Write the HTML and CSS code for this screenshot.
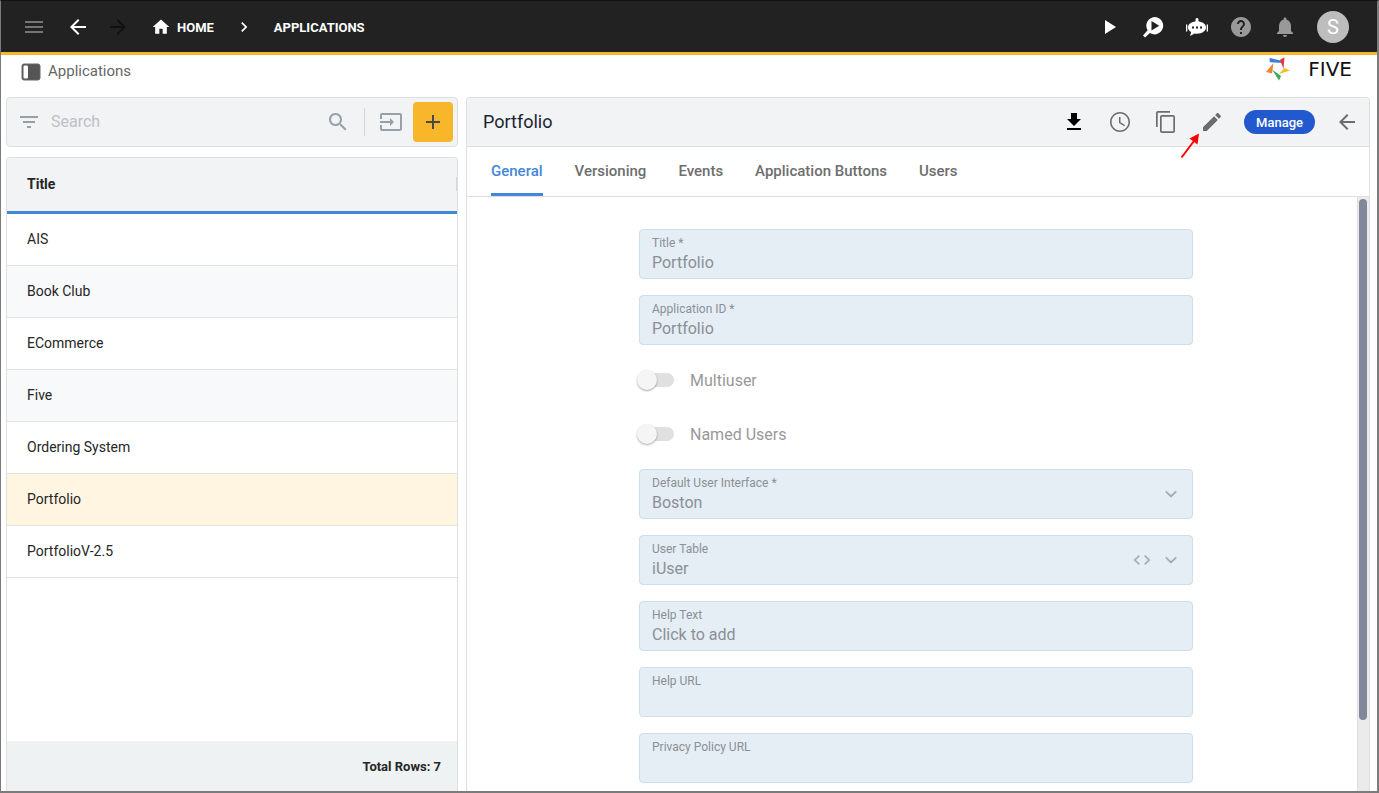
FILE: index.html
```html
<!DOCTYPE html>
<html lang="en">
<head>
<meta charset="utf-8">
<title>Five - Applications</title>
<link rel="stylesheet" href="styles.css">
</head>
<body>
<div class="app">
  <header class="topbar">
    <button class="icon-btn menu" aria-label="Menu"><svg viewBox="0 0 24 24"><path d="M3 18h18v-2H3v2zm0-5h18v-2H3v2zm0-7v2h18V6H3z"/></svg></button>
    <button class="icon-btn back" aria-label="Back"><svg viewBox="0 0 24 24"><path d="M20 11H7.83l5.59-5.59L12 4l-8 8 8 8 1.41-1.41L7.83 13H20v-2z"/></svg></button>
    <button class="icon-btn forward" aria-label="Forward" disabled><svg viewBox="0 0 24 24"><path d="m12 4-1.41 1.41L16.17 11H4v2h12.17l-5.58 5.59L12 20l8-8z"/></svg></button>
    <nav class="crumbs" aria-label="Breadcrumb">
      <a class="crumb home" href="#"><svg class="home-icon" viewBox="0 0 24 24"><path d="M10 20v-6h4v6h5v-8h3L12 3 2 12h3v8z"/></svg>HOME</a>
      <svg class="crumb-sep" viewBox="0 0 24 24"><path d="M10 6 8.590 7.410 13.170 12l-4.580 4.590L10 18l6-6z"/></svg>
      <a class="crumb" href="#">APPLICATIONS</a>
    </nav>
    <div class="top-actions">
      <button class="icon-btn" aria-label="Run"><svg viewBox="0 0 24 24"><path d="M8 5v14l11-7z"/></svg></button>
      <button class="icon-btn" aria-label="Inspect"><svg viewBox="0 0 24 24"><path fill-rule="evenodd" d="M13.500 2a8.700 8.700 0 1 1-4.600 16.100L4 22.500 2 20.500l4.600-5.200A8.700 8.700 0 0 1 13.500 2zM10.500 6v9.400l7.700-4.700z"/></svg></button>
      <button class="icon-btn" aria-label="Assistant"><svg viewBox="0 0 24 24"><path fill-rule="evenodd" d="M12 3a1.500 1.500 0 0 1 1.300 2.300l.5 1.300c4.200.5 7.200 2.800 7.200 5.900 0 3.400-4 6.200-9 6.200-.8 0-1.600-.1-2.300-.2L5 21l1.200-3.900C4.200 16 3 14.400 3 12.500c0-3.100 3-5.400 7.200-5.900l.5-1.300A1.500 1.500 0 0 1 12 3zM7 11.500v2h2v-2zm4 0v2h2v-2zm4 0v2h2v-2z"/><path d="M1 9.500h1.300v7H1zM21.700 9.500H23v7h-1.300z"/></svg></button>
      <button class="icon-btn dim" aria-label="Help"><svg viewBox="0 0 24 24"><path d="M12 2C6.480 2 2 6.480 2 12s4.480 10 10 10 10-4.480 10-10S17.520 2 12 2zm1 17h-2v-2h2v2zm2.070-7.750-.9.920C13.450 12.900 13 13.500 13 15h-2v-.5c0-1.100.450-2.100 1.170-2.830l1.240-1.260c.370-.360.590-.860.590-1.410 0-1.100-.9-2-2-2s-2 .9-2 2H8c0-2.210 1.790-4 4-4s4 1.790 4 4c0 .880-.360 1.680-.930 2.250z"/></svg></button>
      <button class="icon-btn dim" aria-label="Notifications"><svg viewBox="0 0 24 24"><path d="M12 22c1.100 0 2-.9 2-2h-4c0 1.100.890 2 2 2zm6-6v-5c0-3.070-1.640-5.640-4.500-6.320V4c0-.830-.670-1.500-1.500-1.500s-1.500.670-1.500 1.500v.680C7.630 5.360 6 7.920 6 11v5l-2 2v1h16v-1l-2-2z"/></svg></button>
      <button class="avatar" aria-label="Account">S</button>
    </div>
  </header>

  <div class="subbar">
    <svg class="layout-icon" viewBox="0 0 20 18"><rect x="1" y="1" width="18" height="16" rx="2" fill="#555" stroke="#666" stroke-width="1"/><rect x="2.500" y="2.500" width="4.500" height="13" rx="1" fill="#fff"/></svg>
    <span class="subbar-title">Applications</span>
    <div class="logo">
      <svg viewBox="0 0 24 24"><path fill="#3f7fd6" d="M3.500 1 16.500 4 17 6 3.800 5.200z"/><path fill="#e8343a" d="M14 2.800 18.500.3 17.500 12z"/><path fill="#fbb829" d="M24 13.500 13 17 18.500 11z"/><path fill="#3aa757" d="M6 12.500 15 19 13 23.500z"/><path fill="#f58233" d="M7.500 6 6 16.500 0 15z"/></svg>
      <span>FIVE</span>
    </div>
  </div>

  <main class="content">
    <section class="list-pane">
      <div class="searchbar">
        <svg class="filter-icon" viewBox="0 0 24 24"><path d="M10 18h4v-2h-4v2zM3 6v2h18V6H3zm3 7h12v-2H6v2z"/></svg>
        <input class="search" type="text" placeholder="Search" aria-label="Search">
        <button class="icon-btn" aria-label="Search records"><svg viewBox="0 0 24 24"><path d="M15.500 14h-.790l-.280-.270C15.410 12.590 16 11.110 16 9.500 16 5.910 13.090 3 9.500 3S3 5.910 3 9.500 5.910 16 9.500 16c1.610 0 3.090-.590 4.230-1.570l.270.280v.790l5 4.990L20.490 19l-4.990-5zm-6 0C7.010 14 5 11.990 5 9.500S7.010 5 9.500 5 14 7.010 14 9.500 11.990 14 9.500 14z"/></svg></button>
        <span class="divider"></span>
        <button class="icon-btn" aria-label="Import"><svg viewBox="0 0 24 24"><path d="M21 3H3c-1.100 0-2 .9-2 2v4h2V5h18v14H3v-4H1v4c0 1.100.9 2 2 2h18c1.100 0 2-.9 2-2V5c0-1.100-.9-2-2-2zM11 16l4-4-4-4v3H1v2h10z"/></svg></button>
        <button class="add" aria-label="Add"><svg viewBox="0 0 24 24"><path d="M19 13h-6v6h-2v-6H5v-2h6V5h2v6h6z"/></svg></button>
      </div>
      <div class="list-card">
        <table class="list">
          <thead><tr><th scope="col"><div class="th-inner">Title<span class="grip"></span></div></th></tr></thead>
          <tbody>
            <tr><td>AIS</td></tr>
            <tr><td>Book Club</td></tr>
            <tr><td>ECommerce</td></tr>
            <tr><td>Five</td></tr>
            <tr><td>Ordering System</td></tr>
            <tr class="selected"><td>Portfolio</td></tr>
            <tr><td>PortfolioV-2.5</td></tr>
          </tbody>
        </table>
        <div class="list-footer">Total Rows: 7</div>
      </div>
    </section>

    <section class="detail">
      <div class="detail-head">
        <h1>Portfolio</h1>
        <button class="icon-btn download" aria-label="Download"><svg viewBox="0 0 24 24"><path d="M19 9h-4V3H9v6H5l7 7zM5 18v2h14v-2z"/></svg></button>
        <button class="icon-btn" aria-label="History"><svg viewBox="0 0 24 24"><path d="M11.990 2C6.470 2 2 6.480 2 12s4.470 10 9.990 10C17.520 22 22 17.520 22 12S17.520 2 11.990 2zM12 20.400c-4.640 0-8.400-3.760-8.400-8.400S7.360 3.600 12 3.600s8.400 3.760 8.400 8.400-3.760 8.400-8.400 8.400z"/><path d="M12.500 7H11v6l5.250 3.150.750-1.230-4.500-2.670z"/></svg></button>
        <button class="icon-btn" aria-label="Copy"><svg viewBox="0 0 24 24"><path d="M16 1H4c-1.100 0-2 .9-2 2v14h1.700V2.700H16V1zm3 4H8c-1.100 0-2 .9-2 2v14c0 1.100.9 2 2 2h11c1.100 0 2-.9 2-2V7c0-1.100-.9-2-2-2zm.3 16.300H7.700V6.700h11.600v14.600z"/></svg></button>
        <button class="icon-btn edit" aria-label="Edit"><svg viewBox="0 0 24 24"><path d="M3 17.250V21h3.750L17.810 9.940l-3.750-3.750L3 17.250zM20.710 7.040c.390-.390.390-1.020 0-1.410l-2.340-2.340c-.390-.390-1.020-.390-1.410 0l-1.830 1.830 3.750 3.750 1.830-1.830z"/></svg><svg class="pointer" viewBox="0 0 20 26"><path d="M1.500 24.500 14 8" stroke="#f00" stroke-width="2" fill="none"/><path d="M19 .5 17.500 11.500 9.500 5.500z" fill="#f00"/></svg></button>
        <button class="manage">Manage</button>
        <button class="icon-btn close" aria-label="Close"><svg viewBox="0 0 24 24"><path d="M20 11H7.830l5.590-5.590L12 4l-8 8 8 8 1.410-1.410L7.830 13H20v-2z"/></svg></button>
      </div>
      <div class="tabs" role="tablist">
        <button class="tab active" role="tab" aria-selected="true">General</button>
        <button class="tab" role="tab">Versioning</button>
        <button class="tab" role="tab">Events</button>
        <button class="tab" role="tab">Application Buttons</button>
        <button class="tab" role="tab">Users</button>
      </div>
      <div class="detail-body">
        <form class="form">
          <div class="field"><label for="title">Title *</label><input id="title" type="text" value="Portfolio" disabled></div>
          <div class="field"><label for="appid">Application ID *</label><input id="appid" type="text" value="Portfolio" disabled></div>
          <label class="switch"><input type="checkbox" disabled>Multiuser</label>
          <label class="switch"><input type="checkbox" disabled>Named Users</label>
          <div class="field"><label for="ui">Default User Interface *</label><select id="ui" disabled><option>Boston</option></select>
            <span class="adorn"><svg viewBox="0 0 24 24"><path d="M6.500 8.100 12 13.200l5.500-5.100L19 9.600l-7 6.900-7-6.900z"/></svg></span></div>
          <div class="field"><label for="usertable">User Table</label><select id="usertable" disabled><option>iUser</option></select>
            <span class="adorn"><svg class="code" viewBox="0 0 24 24"><path d="M9.400 16.600 4.800 12l4.600-4.600L8 6l-6 6 6 6zm5.200 0 4.600-4.600-4.600-4.600L16 6l6 6-6 6z"/></svg><svg viewBox="0 0 24 24"><path d="M6.500 8.100 12 13.200l5.500-5.100L19 9.600l-7 6.900-7-6.900z"/></svg></span></div>
          <div class="field"><label for="help">Help Text</label><input id="help" type="text" value="Click to add" disabled></div>
          <div class="field"><label for="helpurl">Help URL</label><input id="helpurl" type="text" disabled></div>
          <div class="field"><label for="privacy">Privacy Policy URL</label><input id="privacy" type="text" disabled></div>
        </form>
        <div class="scroll-track"><div class="scroll-thumb"></div></div>
      </div>
    </section>
  </main>
</div>
</body>
</html>
```
FILE: styles.css
```css
* { box-sizing: border-box; }

body {
  margin: 0;
  font-family: Roboto, "Liberation Sans", sans-serif;
  font-size: 14px;
  color: #262626;
  background: #fff;
}

button, input, select { font: inherit; color: inherit; }

button {
  padding: 0;
  border: 0;
  background: none;
  cursor: pointer;
}

a { color: inherit; text-decoration: none; }

svg { display: block; fill: currentColor; }

.app {
  display: flex;
  flex-direction: column;
  height: 100vh;
  border: 1px solid #7b7b7b;
  border-right-width: 2px;
  border-bottom-width: 2px;
  border-top-color: #111;
  overflow: hidden;
}

.icon-btn { flex: none; width: 24px; height: 24px; }
.icon-btn svg { width: 24px; height: 24px; }

/* Top bar */
.topbar {
  flex: none;
  display: flex;
  align-items: center;
  height: 54px;
  padding: 0 28px 0 21px;
  background: #222;
  color: #fff;
  border-bottom: 3px solid #f8b62b;
}
.menu { color: #757575; }
.back { margin-left: 20px; }
.forward { margin-left: 16px; color: #111; }

.crumbs {
  display: flex;
  align-items: center;
  margin-left: 21px;
  padding-top: 1px;
  font-size: 13px;
  font-weight: 700;
}
.crumb { display: flex; align-items: center; }
.home-icon { width: 20px; height: 20px; margin-right: 6px; }
.crumb-sep { width: 20px; height: 20px; margin: 0 20px; }

.top-actions {
  display: flex;
  align-items: center;
  gap: 20px;
  margin-left: auto;
}
.dim { color: #999; }
.avatar {
  width: 32px;
  height: 32px;
  border-radius: 50%;
  background: #bdbdbd;
  font-size: 20px;
}

/* Page title row */
.subbar {
  flex: none;
  display: flex;
  align-items: center;
  height: 42px;
  padding: 0 25px 8px 20px;
  font-size: 15px;
  color: #666;
}
.subbar-title { padding-bottom: 2px; }
.layout-icon { width: 20px; height: 18px; margin-right: 7px; }
.logo {
  display: flex;
  align-items: center;
  gap: 18px;
  margin-left: auto;
  padding-bottom: 6px;
  font-family: "DejaVu Sans", sans-serif;
  font-size: 20px;
  line-height: 24px;
  color: #111;
}
.logo svg { width: 24px; height: 24px; }

/* Two panes */
.content {
  flex: 1;
  display: flex;
  gap: 8px;
  min-height: 0;
  padding: 0 7px 0 5px;
}

.list-pane {
  flex: 0 0 452px;
  display: flex;
  flex-direction: column;
  gap: 10px;
}

.searchbar {
  flex: none;
  display: flex;
  align-items: center;
  height: 50px;
  padding: 0 4px 0 10px;
  border: 1px solid #dedfe0;
  border-radius: 4px;
  background: #f1f3f5;
  color: #98a0a7;
}
.filter-icon { flex: none; width: 24px; height: 24px; }
.search {
  flex: 1;
  min-width: 0;
  padding: 0 10px 2px;
  border: 0;
  outline: 0;
  background: none;
  font-size: 16px;
}
.search::placeholder { color: #bdc1c4; opacity: 1; }
.divider {
  width: 1px;
  height: 28px;
  margin: 0 14px;
  background: #d2d4d6;
}
.add {
  display: grid;
  place-items: center;
  width: 40px;
  height: 40px;
  margin-left: 10px;
  border-radius: 4px;
  background: #f8b62b;
  color: #484848;
}
.add svg { width: 24px; height: 24px; }

.list-card {
  flex: 1;
  display: flex;
  flex-direction: column;
  min-height: 0;
  border: 1px solid #dedfe0;
  border-bottom: 0;
  border-radius: 4px 4px 0 0;
  overflow: hidden;
}
.list { width: 100%; border-collapse: separate; border-spacing: 0; }
.list th {
  height: 56px;
  padding: 0 0 2px 20px;
  border-bottom: 3px solid #4487d8;
  background: #f1f3f5;
  text-align: left;
  font-weight: 700;
}
.th-inner { display: flex; justify-content: space-between; align-items: center; }
.grip { width: 1px; height: 14px; background: #d5d7d9; }
.list td {
  height: 52px;
  padding: 0 20px 2px;
  border-bottom: 1px solid #e2e3e4;
}
.list tbody tr:nth-child(even) td { background: #f8f9fb; }
.list tbody tr.selected td { background: #fff5e1; }
.list-footer {
  margin-top: auto;
  padding: 2px 16px 0;
  background: #eef2f3;
  text-align: right;
  line-height: 48px;
  font-size: 13px;
  font-weight: 700;
}

/* Detail pane */
.detail {
  flex: 1;
  display: flex;
  flex-direction: column;
  min-width: 0;
  border: 1px solid #dedfe0;
  border-bottom: 0;
  border-radius: 4px 4px 0 0;
  overflow: hidden;
}
.detail-head {
  flex: none;
  display: flex;
  align-items: center;
  height: 49px;
  padding: 0 10px 0 16px;
  border-bottom: 1px solid #dedfe0;
  background: #f1f3f5;
  color: #6c6c6c;
}
.detail-head h1 {
  flex: 1;
  margin: 0;
  padding-bottom: 2px;
  font-size: 18px;
  font-weight: 400;
  color: #1b2433;
}
.detail-head .icon-btn { margin-left: 22px; }
.detail-head .download { color: #000; }
.detail-head .close { margin-left: 20px; }
.edit { position: relative; }
.icon-btn .pointer {
  position: absolute;
  top: 23px;
  left: -20px;
  width: 20px;
  height: 26px;
}
.manage {
  height: 24px;
  margin-left: 20px;
  padding: 0 12px;
  border-radius: 12px;
  background: #2259cf;
  color: #fff;
  font-size: 13px;
  font-weight: 500;
}

.tabs {
  flex: none;
  display: flex;
  gap: 32px;
  height: 50px;
  padding: 0 24px;
  border-bottom: 1px solid #dedfe0;
}
.tab {
  padding-bottom: 2px;
  border-top: 3px solid transparent;
  border-bottom: 3px solid transparent;
  font-size: 15px;
  font-weight: 500;
  color: #6e6e6e;
}
.tab.active { color: #4487d8; border-bottom-color: #4487d8; }

.detail-body {
  flex: 1;
  display: flex;
  min-height: 0;
  padding-left: 8px;
  overflow: hidden;
}
.form {
  flex: 1;
  display: flex;
  flex-direction: column;
  gap: 16px;
  max-width: 554px;
  margin: 0 auto;
  padding-top: 32px;
}

.field {
  flex: none;
  position: relative;
  display: flex;
  flex-direction: column;
  height: 50px;
  padding: 5px 12px;
  border: 1px solid #cddfed;
  border-radius: 4px;
  background: #e5edf5;
  color: #8b9095;
}
.field label { font-size: 12px; line-height: 16px; }
.field input, .field select {
  width: 100%;
  height: 22px;
  padding: 0;
  border: 0;
  background: none;
  appearance: none;
  font-size: 16px;
  color: inherit;
  opacity: 1;
}
.field select { height: 24px; }
.adorn {
  position: absolute;
  right: 11px;
  top: 14px;
  display: flex;
  gap: 9px;
  color: #a5adb5;
}
.adorn svg { width: 20px; height: 20px; }

.switch {
  flex: none;
  display: flex;
  align-items: center;
  gap: 16px;
  height: 38px;
  font-size: 16px;
  color: #999;
}
.switch input {
  appearance: none;
  display: flex;
  align-items: center;
  width: 34px;
  height: 14px;
  margin: 0 0 0 1px;
  border-radius: 7px;
  background: #e0e0e0;
}
.switch input::before {
  content: "";
  flex: none;
  width: 20px;
  height: 20px;
  margin-left: -3px;
  border-radius: 50%;
  background: #f5f5f5;
  box-shadow: 0 1px 2px rgba(0, 0, 0, 0.35);
}

.scroll-track {
  flex: none;
  width: 12px;
  padding: 2px 2px 0 1px;
  border-left: 1px solid #dedede;
  background: #ebebeb;
}
.scroll-thumb { height: 88%; border-radius: 4px; background: #80889a; }
```
